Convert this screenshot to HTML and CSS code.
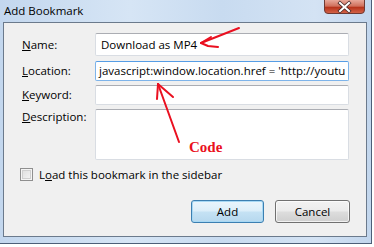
FILE: index.html
```html
<!DOCTYPE html>
<html>
<head>
<meta charset="utf-8">
<link rel="stylesheet" href="styles.css">
</head>
<body>
<div class="window">
  <div class="titlebar">
    <span class="title">Add Bookmark</span>
    <div class="close">
      <svg width="41" height="14" viewBox="0 0 41 14">
        <defs>
          <linearGradient id="cg" x1="0" y1="0" x2="0" y2="1">
            <stop offset="0" stop-color="#e8a89a"/>
            <stop offset="0.45" stop-color="#d0705c"/>
            <stop offset="0.55" stop-color="#b8341c"/>
            <stop offset="1" stop-color="#d4664a"/>
          </linearGradient>
        </defs>
        <path d="M0.5 0 V10 Q0.5 13.5 4 13.5 H37 Q40.5 13.5 40.5 10 V0" fill="url(#cg)" stroke="#6e3a34"/>
        <path d="M16 3 L25 11 M25 3 L16 11" stroke="#4a2a28" stroke-width="3.6" stroke-linecap="square"/>
        <path d="M16 3 L25 11 M25 3 L16 11" stroke="#ffffff" stroke-width="2" stroke-linecap="square"/>
      </svg>
    </div>
  </div>
  <div class="client">
    <div class="form">
      <span class="lbl"><u>N</u>ame:</span>
      <div class="field name">Download as MP4</div>
      <span class="lbl"><u>L</u>ocation:</span>
      <div class="field focus">javascript:window.location.href = 'http://youtu</div>
      <span class="lbl"><u>K</u>eyword:</span>
      <div class="field"></div>
      <span class="lbl top"><u>D</u>escription:</span>
      <div class="field desc"></div>
    </div>
    <div class="check-row">
      <span class="checkbox"></span>
      <span class="check-label">L<u>o</u>ad this bookmark in the sidebar</span>
    </div>
    <div class="buttons">
      <button class="btn default">Add</button>
      <button class="btn cancel">Cancel</button>
    </div>
  </div>
  <svg class="annot" width="374" height="247" viewBox="0 0 374 247">
    <g stroke="#ea1020" stroke-width="2" fill="none" stroke-linecap="round" stroke-linejoin="round">
      <path d="M239 28 L201 43"/>
      <path d="M201 43 L211 37"/>
      <path d="M201 43 L208 46 L218 47"/>
      <path d="M179 142 L158 84"/>
      <path d="M158 84 L157 99"/>
      <path d="M158 84 L173 97"/>
    </g>
    <text x="189" y="152" class="code">Code</text>
  </svg>
</div>
</body>
</html>
```

FILE: styles.css
```css
* { box-sizing: border-box; }
html, body { margin: 0; padding: 0; background: #ffffff; }
body { width: 374px; height: 247px; overflow: hidden; }

.window {
  position: relative;
  width: 372px;
  height: 244px;
  padding: 0 4px 0 3px;
  background: linear-gradient(90deg, #c3d7ee 0%, #d6e5f5 35%, #c8dbf0 60%, #d4e3f4 85%, #c2d6ed 100%);
  border-right: 1px solid #4d5f78;
  border-bottom: 1px solid #4d5f78;
  font-family: "Open Sans", "Noto Sans", sans-serif;
  font-size: 11.5px;
  color: #000;
}

.titlebar {
  height: 22px;
  display: flex;
  align-items: flex-start;
  justify-content: space-between;
  padding: 0 2px 0 1px;
}
.title {
  font-size: 11.5px;
  margin-top: 3px;
  color: #000;
}
.close { display: flex; line-height: 0; }

.client {
  width: 364px;
  height: 215px;
  background: #f0f0f0;
  border: 1px solid #6b7a8c;
  display: flex;
  flex-direction: column;
}

.form {
  display: grid;
  grid-template-columns: 73px 1fr;
  grid-template-rows: 24px 20px 20px 51px;
  row-gap: 4px;
  padding: 10px 17px 0 18px;
}
.lbl {
  align-self: center;
  line-height: 14px;
}
.lbl.top { align-self: start; padding-top: 1px; }
.field {
  background: #fff;
  border: 1px solid #d9dde3;
  border-top-color: #abadb3;
  border-radius: 2px;
  padding: 0 4px;
  font-size: 11.5px;
  line-height: 18px;
  white-space: nowrap;
  overflow: hidden;
}
.field.name { height: 23px; line-height: 21px; padding-left: 5px; }
.field.focus { border-color: #7eb4ea; border-top-color: #569de5; padding-left: 3px; }
.field.desc { height: 51px; }

.check-row {
  display: flex;
  align-items: center;
  gap: 6px;
  margin-top: 8px;
  padding-left: 16px;
  height: 13px;
}
.checkbox {
  width: 13px;
  height: 13px;
  border: 1px solid #8f8f8f;
  background: linear-gradient(135deg, #dcdcdc, #f6f6f6);
  box-shadow: inset 0 0 0 1px #f4f4f4, inset 0 0 0 2px #cfcfcf;
}
.check-label { font-size: 11.5px; line-height: 14px; }

.buttons {
  display: flex;
  justify-content: flex-end;
  gap: 11px;
  margin-top: 19px;
  padding-right: 16px;
}
.btn {
  height: 23px;
  border: 1px solid #707070;
  border-radius: 3px;
  font-family: inherit;
  font-size: 11.5px;
  padding: 0;
  color: #000;
  background: linear-gradient(180deg, #f2f2f2 0%, #ebebeb 48%, #dddddd 52%, #cfcfcf 100%);
  box-shadow: inset 0 0 0 1px rgba(255,255,255,0.7);
}
.btn.default {
  width: 73px;
  border-color: #3c7fb1;
  background: linear-gradient(180deg, #eaf5fc 0%, #dceef9 48%, #c5e2f4 52%, #b6d8ee 100%);
  box-shadow: inset 0 0 0 1px #a7d8f4;
}
.btn.cancel { width: 75px; }

.annot {
  position: absolute;
  left: 0;
  top: 0;
  pointer-events: none;
}
.code {
  font-family: "Liberation Serif", serif;
  font-weight: bold;
  font-size: 15px;
  fill: #ea1020;
}
```
